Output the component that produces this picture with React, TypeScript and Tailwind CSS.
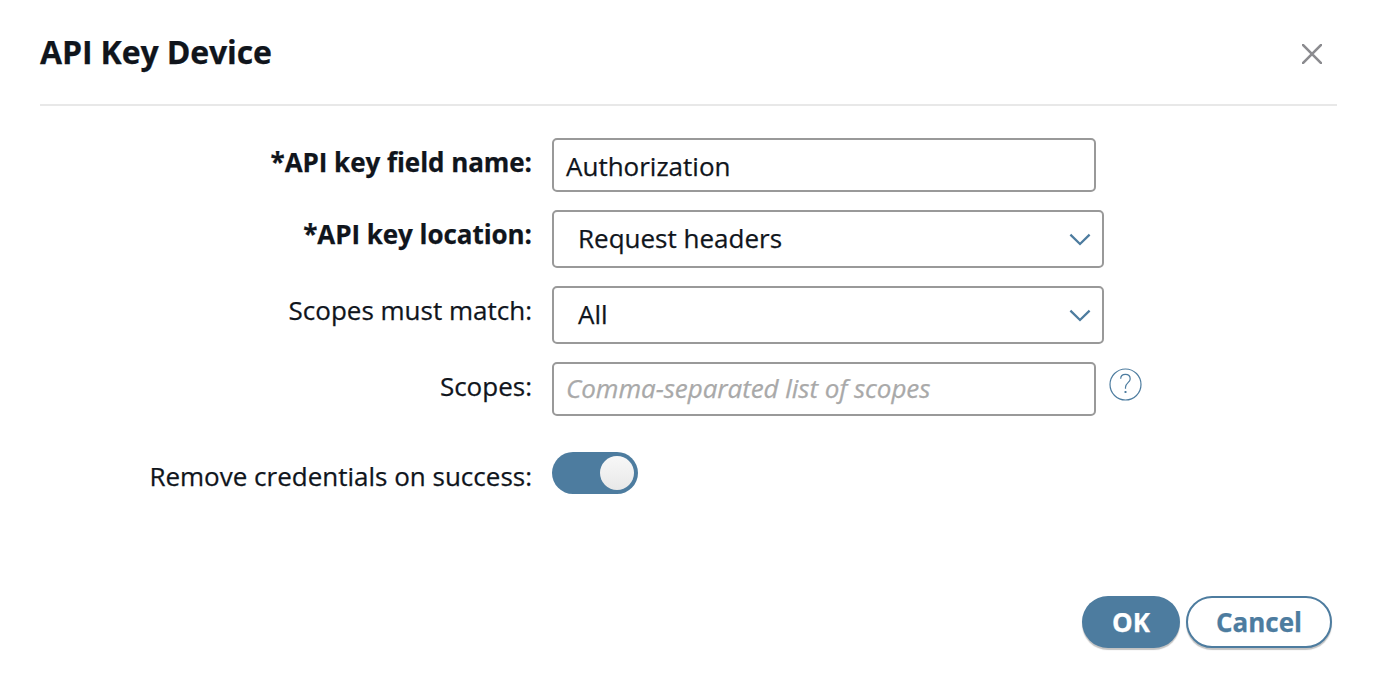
import type { ReactNode } from "react";

function Row({ label, bold, className, children }: { label: string; bold?: boolean; className: string; children: ReactNode }) {
  return (
    <div className={`flex items-start ${className}`}>
      <div className={`mt-1.5 w-[532px] shrink-0 text-right whitespace-nowrap leading-9 ${bold ? "font-bold tracking-[-0.05px]" : ""}`}>{label}</div>
      <div className="ml-5 flex items-start">{children}</div>
    </div>
  );
}

function Select({ value }: { value: string }) {
  return (
    <div className="flex h-[58px] w-[552px] items-start justify-between rounded-[5px] border-2 border-[#999] pl-6 pr-3">
      <span className="mt-2 leading-9">{value}</span>
      <svg width="20" height="12" viewBox="0 0 20 12" fill="none" stroke="#4d7c9f" strokeWidth="2.3" className="mt-[22px] overflow-visible">
        <path d="M0.4 0.7L10 10L19.6 0.7" />
      </svg>
    </div>
  );
}

export default function App() {
  return (
    <div className="flex h-[678px] w-[1378px] flex-col overflow-hidden bg-white font-['Open_Sans',sans-serif] text-[26px] text-[#10151c] [-webkit-text-stroke:0.25px_currentColor]">
      <header className="mx-10 flex h-[106px] w-[1297px] shrink-0 justify-between border-b-2 border-[#e8e8e8] pr-[15px]">
        <h1 className="mt-7 text-[32px] font-bold leading-12 tracking-[-0.14px]">API Key Device</h1>
        <svg width="20" height="20" viewBox="0 0 20 20" fill="none" stroke="#8b8b8f" strokeWidth="2.6" className="mt-11">
          <path d="M0 0L20 20M20 0L0 20" />
        </svg>
      </header>
      <main className="flex flex-col pt-8">
        <Row label="*API key field name:" bold className="h-[72px]">
          <div className="flex h-[54px] w-[544px] rounded-[5px] border-2 border-[#999] px-3 pt-2 leading-9">Authorization</div>
        </Row>
        <Row label="*API key location:" bold className="h-[76px]">
          <Select value="Request headers" />
        </Row>
        <Row label="Scopes must match:" className="h-[76px]">
          <Select value="All" />
        </Row>
        <Row label="Scopes:" className="h-[90px]">
          <div className="flex h-[54px] w-[544px] rounded-[5px] border-2 border-[#999] px-3 pt-1.5 italic leading-9 tracking-[-0.06px] text-[#a9a9a9]">Comma-separated list of scopes</div>
          <svg width="33" height="33" viewBox="0 0 33 33" fill="none" stroke="#4d7c9f" strokeWidth="1.2" className="ml-[13px] mt-1.5">
            <circle cx="16.5" cy="16.5" r="15.5" />
            <path d="M11.7 10.8C11.7 8 13.7 6.4 16.4 6.4C19.2 6.4 21.2 8.2 21.2 10.9C21.2 14.5 16.5 14.9 16.5 19.3V20.8" />
            <path d="M16.5 23V25" strokeWidth="1.9" />
          </svg>
        </Row>
        <Row label="Remove credentials on success:" className="h-[90px]">
          <div className="flex h-[42px] w-[86px] items-center justify-end rounded-full bg-[#4d7c9f] pr-1">
            <div className="size-[34px] rounded-full bg-linear-to-b from-[#f8f8f8] to-[#e8e8e8]" />
          </div>
        </Row>
      </main>
      <footer className="mt-[54px] flex justify-end gap-1.5 pr-[46px] font-bold">
        <button className="h-[52px] w-[98px] rounded-full bg-[#4d7c9f] text-white shadow-[0_2px_1px_rgba(0,0,0,0.24)]">OK</button>
        <button className="h-[52px] w-[146px] rounded-full border-2 border-[#4d7c9f] bg-white text-[#4d7c9f] shadow-[0_2px_1px_rgba(0,0,0,0.24)]">Cancel</button>
      </footer>
    </div>
  );
}
